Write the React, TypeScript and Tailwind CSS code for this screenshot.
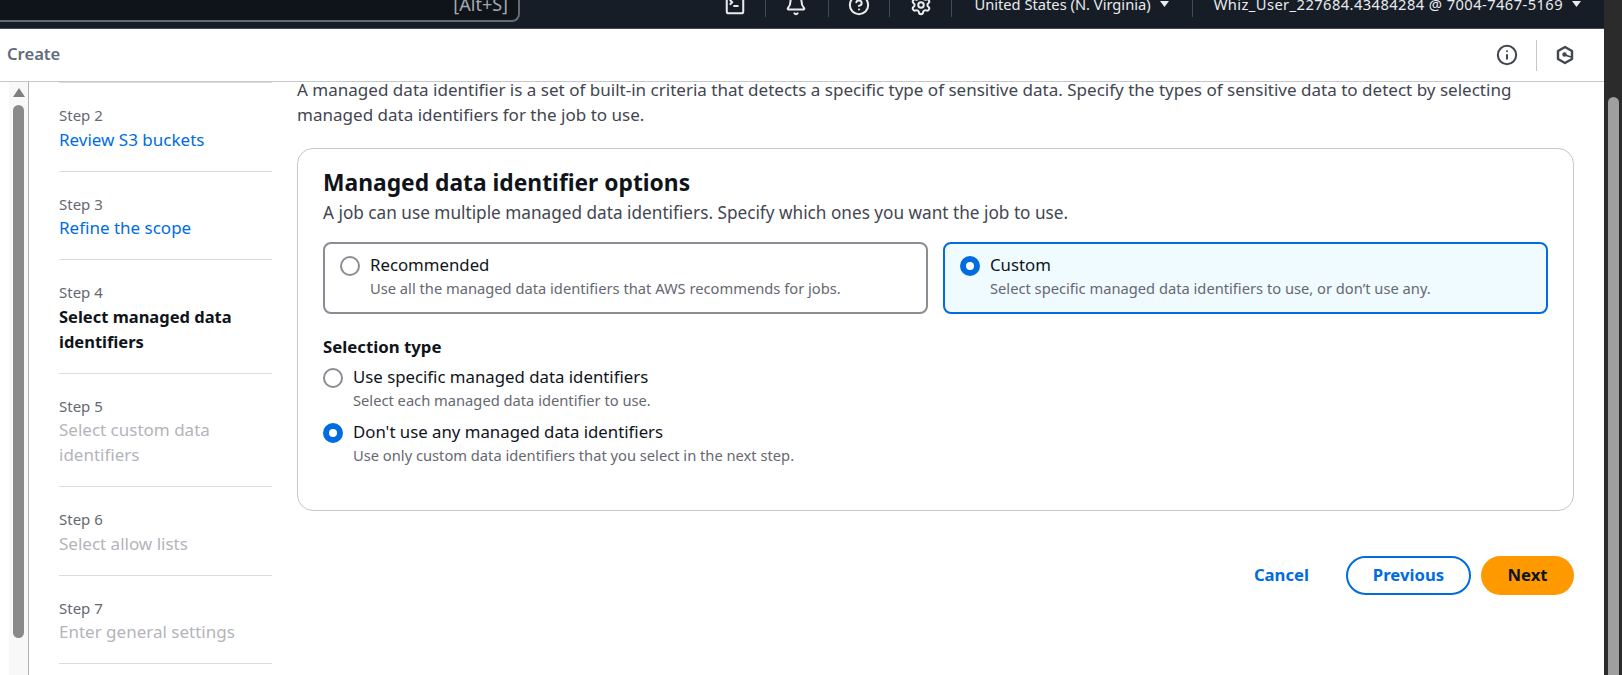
import { Bell, CircleHelp, Info, Settings, SquareTerminal } from 'lucide-react';

const font = 'font-["Noto_Sans",sans-serif]';

function Caret() {
  return (
    <svg width="11" height="8" viewBox="0 0 11 8" className="ml-2">
      <path d="M1 1h9L5.5 7z" fill="#e9ebed" />
    </svg>
  );
}

function Radio({ checked }: { checked: boolean }) {
  if (checked) {
    return <span className="box-border block h-5 w-5 shrink-0 rounded-full border-[6px] border-[#006ce0] bg-white" />;
  }
  return <span className="box-border block h-5 w-5 shrink-0 rounded-full border-2 border-[#8c8c94] bg-white" />;
}

const steps = [
  { n: 2, lines: ['Review S3 buckets'], state: 'link' },
  { n: 3, lines: ['Refine the scope'], state: 'link' },
  { n: 4, lines: ['Select managed data', 'identifiers'], state: 'active' },
  { n: 5, lines: ['Select custom data', 'identifiers'], state: 'off' },
  { n: 6, lines: ['Select allow lists'], state: 'off' },
  { n: 7, lines: ['Enter general settings'], state: 'off' },
];

export default function App() {
  return (
    <div className={`${font} flex h-[675px] w-[1622px] overflow-hidden bg-white text-[#0f141a]`}>
      <div className="flex h-full w-[1604px] flex-col">
        <header className="flex h-[29px] shrink-0 items-start justify-between overflow-hidden border-b border-[#414d5c] bg-[#161d26] text-[#e9ebed]">
          <div className="flex h-[22px] w-[520px] items-start justify-end rounded-br-lg border-r-2 border-b-2 border-[#666b73] bg-[#0f141a] pr-[10px]">
            <span className="-mt-[8px] text-[18px] leading-6 text-[#a4a9b0]">[Alt+S]</span>
          </div>
          <div className="-mt-[9px] mr-[22px] flex items-center text-[14.7px]">
            <div className="flex h-[26px] items-center">
              <SquareTerminal size={22} strokeWidth={2.2} className="mt-[2px]" />
              <span className="mr-[19px] ml-[19px] h-[26px] w-px bg-[#414d5c]" />
              <Bell size={22} strokeWidth={2.2} className="mt-[2px]" />
              <span className="mr-[19px] ml-[21px] h-[26px] w-px bg-[#414d5c]" />
              <CircleHelp size={22} strokeWidth={2.2} className="mt-[2px]" />
              <span className="mr-[20px] ml-[19px] h-[26px] w-px bg-[#414d5c]" />
              <Settings size={22} strokeWidth={2.2} className="mt-[2px]" />
              <span className="ml-[19px] h-[26px] w-px bg-[#414d5c]" />
            </div>
            <span className="ml-[22px] flex items-center leading-5">United States (N. Virginia)<Caret /></span>
            <span className="mr-[21px] ml-[22px] h-[26px] w-px bg-[#414d5c]" />
            <span className="flex items-center leading-5 tracking-[0.43px]">Whiz_User_227684.43484284 @ 7004-7467-5169<Caret /></span>
          </div>
        </header>

        <div className="flex h-[53px] shrink-0 items-center justify-between border-b border-[#c6c6cd] pr-[29px] pl-[7px]">
          <span className="-mt-[2px] text-[16.6px] font-semibold text-[#5f6b7a]">Create</span>
          <div className="flex items-center">
            <Info size={22} strokeWidth={2.2} className="text-[#424650]" />
            <span className="mx-[18px] h-[31px] w-px bg-[#c6c6cd]" />
            <svg width="20" height="20" viewBox="0 0 20 20" fill="none" stroke="#424650" strokeWidth="2.4" strokeLinejoin="round">
              <path d="M10 2l7 4v8l-7 4-7-4V6z" />
              <circle cx="9.5" cy="9.5" r="2.2" fill="#424650" stroke="none" />
              <path d="M10 10l6 2" strokeWidth="1.8" />
            </svg>
          </div>
        </div>

        <div className="flex min-h-0 flex-1">
          <div className="flex w-[29px] shrink-0 border-r border-[#b0b0b6] pl-[9px]">
            <div className="flex w-[19px] flex-col items-center bg-[#f8f8f8]">
              <svg width="12" height="9" viewBox="0 0 12 9" className="mt-[6px] shrink-0">
                <path d="M6 0L12 9H0z" fill="#808080" />
              </svg>
              <div className="mt-[8px] h-[533px] w-[11px] shrink-0 rounded-full bg-[#8a8a8a]" />
            </div>
          </div>

          <nav className="ml-[30px] w-[213px] shrink-0">
            <div className="h-px bg-[#dcdcdc]" />
            {steps.map((s) => (
              <div key={s.n} className="border-b border-[#dcdcdc] pt-[22px] pb-[19px]">
                <div className="text-[15px] leading-5 text-[#656871]">Step {s.n}</div>
                <div className={`mt-[1.5px] leading-[25px] ${s.state === 'link' ? 'text-[17px] text-[#006ce0]' : s.state === 'active' ? 'text-[16.5px] font-bold text-[#0f141a]' : 'text-[17px] text-[#b4b4bb]'}`}>
                  {s.lines.map((l) => (
                    <div key={l}>{l}</div>
                  ))}
                </div>
              </div>
            ))}
          </nav>

          <main className="ml-[25px] w-[1277px] shrink-0">
            <p className="-mt-[5px] w-[1240px] text-[17.04px] leading-[25px] text-[#424650]">
              A managed data identifier is a set of built-in criteria that detects a specific type of sensitive data. Specify the types of sensitive data to detect by selecting managed data identifiers for the job to use.
            </p>

            <section className="mt-[21px] h-[363px] rounded-2xl border border-[#c6c6cd] px-[25px] pt-[18px]">
              <h2 className="text-[22.8px] leading-8 font-bold">Managed data identifier options</h2>
              <p className="mt-[4px] text-[17.2px] leading-5 text-[#424650]">A job can use multiple managed data identifiers. Specify which ones you want the job to use.</p>

              <div className="mt-[19px] flex gap-[15px]">
                <div className="flex h-[72px] w-[605px] gap-[10px] rounded-lg border-2 border-[#8c8c94] pt-[10px] pl-[15px]">
                  <div className="mt-[2px]"><Radio checked={false} /></div>
                  <div>
                    <div className="text-[16.8px] leading-[22px]">Recommended</div>
                    <div className="mt-[2px] text-[14.7px] leading-5 text-[#656871]">Use all the managed data identifiers that AWS recommends for jobs.</div>
                  </div>
                </div>
                <div className="flex h-[72px] w-[605px] gap-[10px] rounded-lg border-2 border-[#006ce0] bg-[#f0fbff] pt-[10px] pl-[15px]">
                  <div className="mt-[2px]"><Radio checked /></div>
                  <div>
                    <div className="text-[16.8px] leading-[22px]">Custom</div>
                    <div className="mt-[2px] text-[14.7px] leading-5 text-[#656871]">Select specific managed data identifiers to use, or don’t use any.</div>
                  </div>
                </div>
              </div>

              <div className="mt-[23px] text-[16.8px] leading-5 font-bold">Selection type</div>
              <div className="mt-[9px] flex gap-[10px]">
                <div className="mt-[2px]"><Radio checked={false} /></div>
                <div>
                  <div className="text-[16.8px] leading-[22px]">Use specific managed data identifiers</div>
                  <div className="mt-[2px] text-[14.7px] leading-5 text-[#656871]">Select each managed data identifier to use.</div>
                </div>
              </div>
              <div className="mt-[11px] flex gap-[10px]">
                <div className="mt-[2px]"><Radio checked /></div>
                <div>
                  <div className="text-[16.8px] leading-[22px]">Don't use any managed data identifiers</div>
                  <div className="mt-[2px] text-[14.7px] leading-5 text-[#656871]">Use only custom data identifiers that you select in the next step.</div>
                </div>
              </div>
            </section>

            <div className="mt-[45px] flex items-center justify-end text-[16.7px] leading-5 font-bold">
              <span className="-mt-[2px] text-[#006ce0]">Cancel</span>
              <span className="ml-[37px] flex h-[39px] w-[125px] items-center justify-center rounded-full border-2 border-[#006ce0] pb-[2px] text-[#006ce0]">Previous</span>
              <span className="ml-[10px] flex h-[39px] w-[93px] items-center justify-center rounded-full bg-[#ff9900] pb-[2px]">Next</span>
            </div>
          </main>
        </div>
      </div>

      <div className="flex w-[18px] shrink-0 bg-[#2b2b2b] pt-[97px] pl-[4px]">
        <div className="h-[578px] w-[11px] rounded-t-full bg-[#9f9f9f]" />
      </div>
    </div>
  );
}
